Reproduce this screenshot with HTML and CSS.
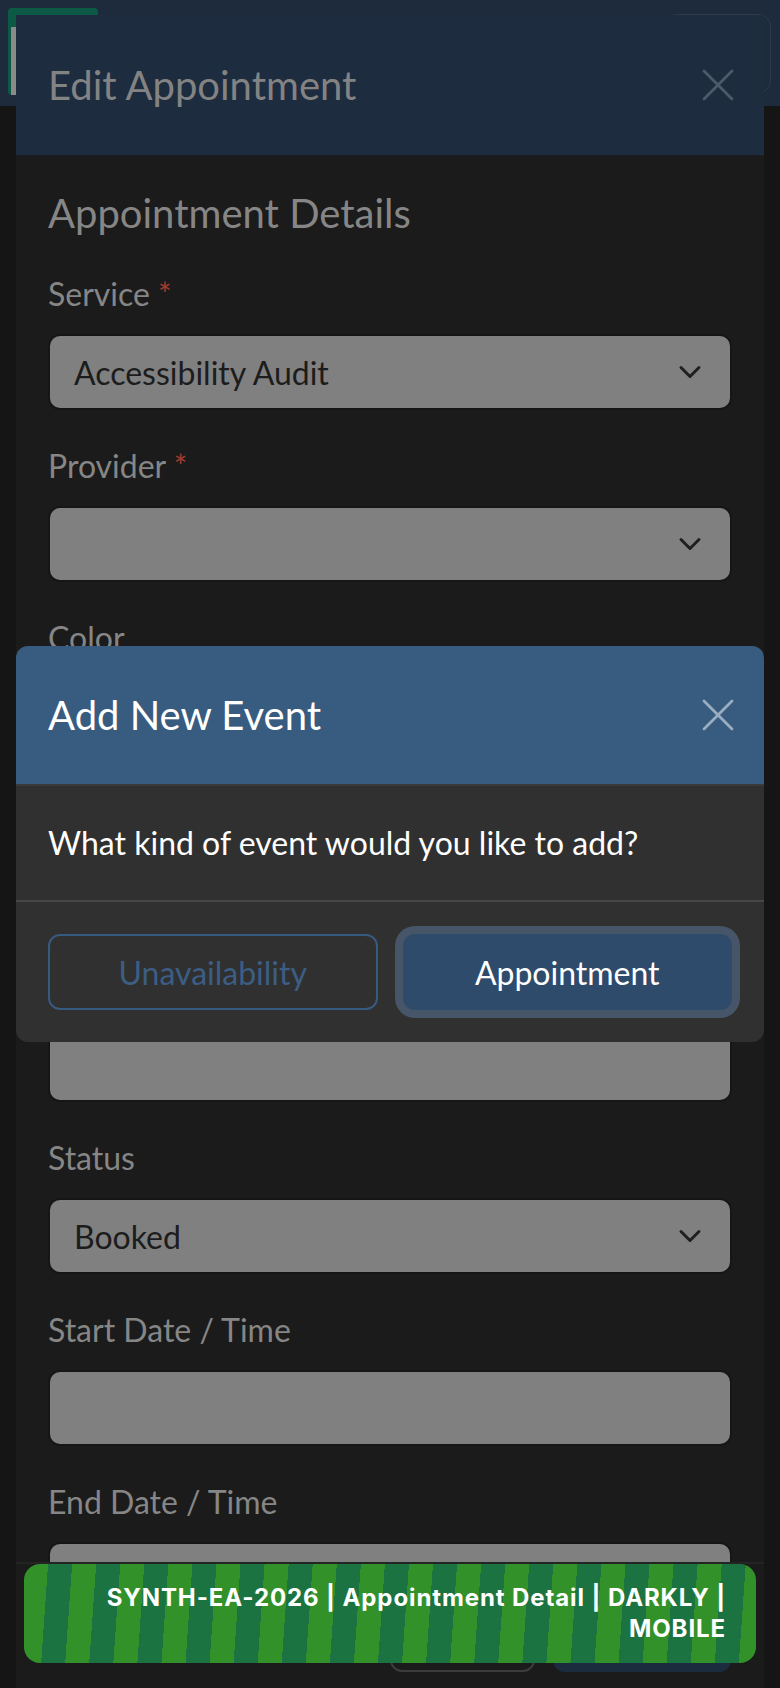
FILE: index.html
```html
<!DOCTYPE html>
<html lang="en">
  <head>
    <meta charset="UTF-8" />
    <meta name="viewport" content="width=device-width, initial-scale=1.0" />
    <title>Appointment Detail</title>
    <link rel="stylesheet" href="styles.css">
  </head>
  <body>
    <!-- Page header (behind the modals) -->
    <header class="topbar">
      <div class="logo"><span class="logo-mark"></span></div>
      <div class="topbar-btn"></div>
    </header>

    <!-- Edit appointment modal, dimmed by the dialog on top -->
    <div class="modal edit-modal">
      <div class="modal-header">
        <h5 class="modal-title">Edit Appointment</h5>
        <svg class="close" width="32" height="32" viewBox="0 0 16 16">
          <line x1="1" y1="1" x2="15" y2="15" />
          <line x1="15" y1="1" x2="1" y2="15" />
        </svg>
      </div>

      <div class="modal-body">
        <h5 class="section-title">Appointment Details</h5>

        <div class="field">
          <label>Service <span class="req">*</span></label>
          <div class="select">
            <span>Accessibility Audit</span>
            <svg class="chevron" width="32" height="24" viewBox="0 0 16 16"><path d="M2 5l6 6 6-6" /></svg>
          </div>
        </div>

        <div class="field">
          <label>Provider <span class="req">*</span></label>
          <div class="select">
            <span></span>
            <svg class="chevron" width="32" height="24" viewBox="0 0 16 16"><path d="M2 5l6 6 6-6" /></svg>
          </div>
        </div>

        <div class="field">
          <label>Color</label>
          <div class="select tall"></div>
        </div>

        <div class="field">
          <label>Status</label>
          <div class="select">
            <span>Booked</span>
            <svg class="chevron" width="32" height="24" viewBox="0 0 16 16"><path d="M2 5l6 6 6-6" /></svg>
          </div>
        </div>

        <div class="field">
          <label>Start Date / Time</label>
          <div class="select"></div>
        </div>

        <div class="field">
          <label>End Date / Time</label>
          <div class="select"></div>
        </div>
      </div>

      <!-- footer buttons sit under the build banner -->
      <div class="modal-footer">
        <button class="btn btn-cancel" aria-label="Cancel"></button>
        <button class="btn btn-save" aria-label="Save"></button>
      </div>
    </div>

    <!-- Add new event dialog -->
    <div class="modal add-modal">
      <div class="modal-header">
        <h5 class="modal-title">Add New Event</h5>
        <svg class="close" width="32" height="32" viewBox="0 0 16 16">
          <line x1="1" y1="1" x2="15" y2="15" />
          <line x1="15" y1="1" x2="1" y2="15" />
        </svg>
      </div>
      <div class="modal-body">What kind of event would you like to add?</div>
      <div class="modal-footer">
        <button class="btn btn-outline">Unavailability</button>
        <button class="btn btn-primary">Appointment</button>
      </div>
    </div>

    <div class="banner">SYNTH-EA-2026 | Appointment Detail | DARKLY | MOBILE</div>
  </body>
</html>
```

FILE: styles.css
```css
body {
  margin: 0;
  height: 1688px;
  overflow: hidden;
  background: #151515;
  font-family: Lato, "Noto Sans", sans-serif;
}

/* page header */
.topbar {
  height: 106px;
  box-sizing: border-box;
  padding: 8px 9px 0 8px;
  display: flex;
  justify-content: space-between;
  align-items: flex-start;
  background: #1e2b3d;
}
.logo {
  width: 90px;
  height: 87px;
  box-sizing: border-box;
  padding: 19px 0 0 3px;
  background: #0c5a45;
  border-radius: 4px;
}
.logo-mark {
  display: block;
  width: 40px;
  height: 68px;
  background: #8a8a8a;
}
.topbar-btn {
  width: 106px;
  height: 79px;
  margin-top: 6px;
  box-sizing: border-box;
  border: 1px solid #2b3a4d;
  border-radius: 12px;
}

/* modals */
.modal {
  position: absolute;
  left: 16px;
  width: 748px;
}
.modal-header {
  height: 140px;
  box-sizing: border-box;
  padding: 0 30px 0 32px;
  display: flex;
  justify-content: space-between;
  align-items: center;
}
.modal-title {
  margin: 0;
  font-size: 40px;
  font-weight: 400;
  line-height: 60px;
}
.close line {
  stroke-width: 1.4;
  stroke-linecap: round;
}

/* edit modal (dimmed) */
.edit-modal {
  top: 15px;
  background: #1b1b1b;
}
.edit-modal .modal-header {
  height: 141px;
  background: #1d2c3f;
  border-bottom: 1px solid #1a1e24;
}
.edit-modal .modal-title {
  color: #838383;
}
.edit-modal .close line {
  stroke: #4c5a6a;
}
.edit-modal .modal-body {
  height: 1406px;
  box-sizing: border-box;
  padding: 33px 32px 0;
  overflow: hidden;
}
.section-title {
  margin: 0 0 33px;
  font-size: 40px;
  font-weight: 400;
  line-height: 48px;
  color: #868686;
}
.field {
  margin-bottom: 32px;
}
.field label {
  display: block;
  margin-bottom: 16px;
  font-size: 32px;
  line-height: 48px;
  color: #868686;
}
.req {
  color: #a33a2f;
}
.select {
  height: 76px;
  box-sizing: border-box;
  padding: 0 24px;
  display: flex;
  justify-content: space-between;
  align-items: center;
  background: #808080;
  border: 2px solid #161616;
  border-radius: 12px;
  font-size: 32px;
  color: #1c1c1c;
}
.select.tall {
  height: 424px;
}
.chevron path {
  fill: none;
  stroke: #1f1f1f;
  stroke-width: 2;
  stroke-linecap: round;
  stroke-linejoin: round;
}
.edit-modal .modal-footer {
  padding: 32px 33px 0;
  display: flex;
  justify-content: flex-end;
  gap: 18px;
  border-top: 2px solid #242424;
  height: 160px;
}

.btn {
  height: 76px;
  box-sizing: border-box;
  border-radius: 12px;
  font-family: Lato, "Noto Sans", sans-serif;
  font-size: 32px;
  cursor: pointer;
}
.btn-cancel {
  width: 145px;
  background: transparent;
  border: 2px solid #3c3c3c;
}
.btn-save {
  width: 178px;
  background: #1c2c3f;
  border: 2px solid #1c2c3f;
}

/* add event dialog */
.add-modal {
  top: 646px;
  background: #303030;
  border-radius: 12px;
  overflow: hidden;
}
.add-modal .modal-header {
  background: #385b80;
  border-bottom: 2px solid #3a3a3a;
}
.add-modal .modal-title {
  color: #fff;
}
.add-modal .close line {
  stroke: #9badc0;
}
.add-modal .modal-body {
  padding: 33px 32px;
  font-size: 32px;
  line-height: 48px;
  color: #fff;
}
.add-modal .modal-footer {
  padding: 32px;
  display: grid;
  grid-template-columns: 1fr 1fr;
  gap: 25px;
  border-top: 2px solid #474747;
}
.btn-outline {
  background: transparent;
  border: 2px solid #375a7f;
  color: #3c5e84;
}
.btn-primary {
  background: #2e4b6b;
  border: 2px solid #2e4b6b;
  color: #fff;
  box-shadow: 0 0 0 8px #465567;
}

/* build banner */
.banner {
  position: fixed;
  left: 24px;
  right: 24px;
  top: 1564px;
  height: 99px;
  box-sizing: border-box;
  padding: 18px 30px;
  border-radius: 16px;
  background: repeating-linear-gradient(94deg, #33912a 0 24px, #1b7342 24px 48px);
  color: #fff;
  font-family: Inter, Roboto, sans-serif;
  font-size: 24px;
  font-weight: 700;
  line-height: 31px;
  letter-spacing: 0.9px;
  text-align: right;
}
```
